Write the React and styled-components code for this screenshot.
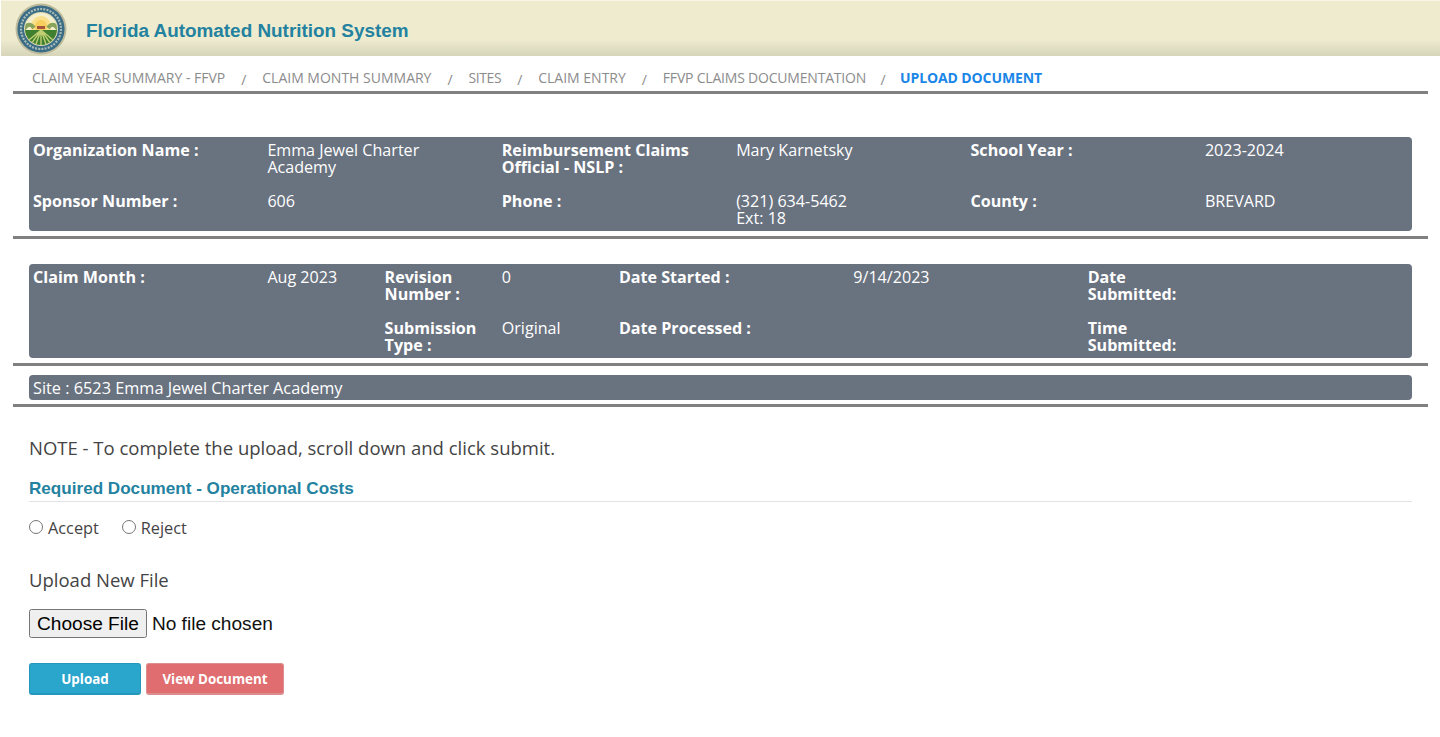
import { Fragment } from "react";
import styled, { createGlobalStyle } from "styled-components";

const GlobalStyle = createGlobalStyle`
  html, body { margin: 0; padding: 0; background: #fff; }
  body { font-family: "Open Sans", "Noto Sans", sans-serif; color: #444; }
  * { box-sizing: border-box; }
`;

const Header = styled.header`
  height: 56px;
  margin-left: 1px;
  padding: 1px 0 0 14px;
  display: flex;
  align-items: center;
  gap: 19px;
  background: linear-gradient(to bottom, #eeebcf 0%, #eeebcf 70%, #d6d4b9 100%);
  border-top: 1px solid #f6f5e6;
`;

const Title = styled.h1`
  margin: 3px 0 0;
  font-family: "Liberation Sans", Arial, sans-serif;
  font-size: 18.9px;
  font-weight: 700;
  color: #23829f;
`;

const Breadcrumbs = styled.nav`
  height: 38px;
  margin: 0 12px 0 13px;
  padding: 13px 0 0 19px;
  display: flex;
  border-bottom: 3px solid #808080;
  font-size: 14px;
  line-height: 17px;
`;

const Crumb = styled.span`
  color: ${(p) => (p.$active ? "#1a86e8" : "#8c8c8c")};
  font-weight: ${(p) => (p.$active ? 700 : 400)};
  letter-spacing: ${(p) => p.$track || 0}px;
  white-space: nowrap;
`;

const Slash = styled.span`
  width: ${(p) => p.$width}px;
  text-align: center;
  color: #8c8c8c;
  padding-top: 2px;
`;

const Panel = styled.section`
  margin: ${(p) => p.$top}px 28px 0 29px;
  padding: 5px 0 4px 4px;
  display: grid;
  grid-template-columns: repeat(11, 117.2px) 1fr;
  row-gap: 17px;
  background: #69727f;
  border-radius: 4px;
  color: #fff;
  font-size: 16.1px;
  line-height: 17px;
`;

const Cell = styled.div`
  grid-column: span ${(p) => p.$span};
  font-weight: ${(p) => (p.$label ? 700 : 400)};
  min-height: 34px;
  padding-right: 8px;
  white-space: pre-line;
`;

const SiteBar = styled.div`
  margin: 9px 28px 0 29px;
  height: 25px;
  padding-left: 4px;
  background: #69727f;
  border-radius: 4px;
  color: #fff;
  font-size: 16.3px;
  line-height: 26px;
`;

const Rule = styled.hr`
  margin: ${(p) => p.$top}px 12px 0 13px;
  border: 0;
  height: 3px;
  background: #808080;
`;

const Content = styled.main`
  padding: 0 28px 0 29px;
`;

const Note = styled.p`
  margin: 29px 0 0;
  font-size: 18.5px;
  line-height: 24px;
  font-weight: 500;
  color: #444;
`;

const SectionTitle = styled.h2`
  margin: 19px 0 0;
  padding-bottom: 2px;
  border-bottom: 1px solid #e3e3e3;
  font-family: "Liberation Sans", Arial, sans-serif;
  font-size: 17.1px;
  line-height: 20px;
  font-weight: 700;
  color: #23829f;
`;

const Radios = styled.div`
  margin-top: 15px;
  height: 22px;
  display: flex;
  align-items: center;
  gap: 23px;
`;

const RadioLabel = styled.label`
  display: flex;
  align-items: center;
  gap: 5px;
  font-size: 16.3px;
  color: #444;
`;

const Radio = styled.input`
  width: 14px;
  height: 14px;
  margin: 0;
  position: relative;
  top: -1px;
`;

const UploadLabel = styled.div`
  margin-top: 29px;
  font-size: 18.5px;
  line-height: 24px;
  color: #444;
`;

const FileInput = styled.input`
  display: block;
  margin-top: 17px;
  width: 320px;
  height: 29px;
  font-family: "Liberation Sans", Arial, sans-serif;
  font-size: 19.1px;
  color: #111;

  &::file-selector-button {
    height: 29px;
    margin-right: 5px;
  }
`;

const Actions = styled.div`
  margin-top: 25px;
  display: flex;
  gap: 5px;
`;

const Button = styled.button`
  height: 32px;
  width: ${(p) => p.$width}px;
  padding: 0;
  border: 1px solid ${(p) => p.$border};
  border-bottom-width: 2px;
  border-radius: 3px;
  background: ${(p) => p.$bg};
  color: #fff;
  font-family: "Open Sans", sans-serif;
  font-size: 13.4px;
  font-weight: 700;
`;

const SealArt = () => (
  <svg width="52" height="52" viewBox="0 0 52 52" aria-hidden="true">
    <defs>
      <clipPath id="sealInner">
        <circle cx="26" cy="26" r="16" />
      </clipPath>
    </defs>
    <circle cx="26" cy="26" r="25.5" fill="#bdbb9c" />
    <circle cx="26" cy="26" r="23.6" fill="#3a6c86" />
    <circle cx="26" cy="26" r="20" fill="none" stroke="#a9bcb8" strokeWidth="2.2" strokeDasharray="2 1.2" />
    <circle cx="26" cy="26" r="17" fill="#dcdab4" />
    <g clipPath="url(#sealInner)">
      <rect x="8" y="8" width="36" height="19" fill="#f6efcd" />
      <circle cx="26" cy="23" r="10" fill="#f9e08c" />
      <circle cx="26" cy="23" r="6" fill="#f8cf5c" />
      <path d="M9 26 q5 -8 10 -1 M33 25 q5 -7 10 1" stroke="#88a35a" strokeWidth="4" fill="none" />
      <rect x="22" y="23" width="8" height="3" fill="#a5553c" />
      <rect x="8" y="27" width="36" height="18" fill="#3f7f30" />
      <path
        d="M26 27 L8 42 M26 27 L14 44 M26 27 L20 44 M26 27 L26 44 M26 27 L32 44 M26 27 L38 44 M26 27 L44 42"
        stroke="#c0cf72"
        strokeWidth="1.4"
      />
    </g>
  </svg>
);

const crumbs = [
  ["CLAIM YEAR SUMMARY - FFVP", 0, 37],
  ["CLAIM MONTH SUMMARY", 0, 37],
  ["SITES", -0.4, 37],
  ["CLAIM ENTRY", 0, 37],
  ["FFVP CLAIMS DOCUMENTATION", -0.2, 34],
];

const orgCells = [
  ["Organization Name :", 2, true],
  ["Emma Jewel Charter\nAcademy", 2],
  ["Reimbursement Claims Official - NSLP :", 2, true],
  ["Mary Karnetsky", 2],
  ["School Year :", 2, true],
  ["2023-2024", 2],
  ["Sponsor Number :", 2, true],
  ["606", 2],
  ["Phone :", 2, true],
  ["(321) 634-5462\nExt: 18", 2],
  ["County :", 2, true],
  ["BREVARD", 2],
];

const claimCells = [
  ["Claim Month :", 2, true],
  ["Aug 2023", 1],
  ["Revision Number :", 1, true],
  ["0", 1],
  ["Date Started :", 2, true],
  ["9/14/2023", 2],
  ["Date Submitted:", 1, true],
  ["", 2],
  ["", 2],
  ["", 1],
  ["Submission Type :", 1, true],
  ["Original", 1],
  ["Date Processed :", 2, true],
  ["", 2],
  ["Time Submitted:", 1, true],
  ["", 2],
];

const renderCells = (cells) =>
  cells.map(([text, span, label], i) => (
    <Cell key={i} $span={span} $label={label}>
      {text}
    </Cell>
  ));

export default function App() {
  return (
    <>
      <GlobalStyle />
      <Header>
        <SealArt />
        <Title>Florida Automated Nutrition System</Title>
      </Header>
      <Breadcrumbs>
        {crumbs.map(([c, track, slash]) => (
          <Fragment key={c}>
            <Crumb $track={track}>{c}</Crumb>
            <Slash $width={slash}>/</Slash>
          </Fragment>
        ))}
        <Crumb $active $track={-0.12}>UPLOAD DOCUMENT</Crumb>
      </Breadcrumbs>
      <Panel $top={43}>{renderCells(orgCells)}</Panel>
      <Rule $top={5} />
      <Panel $top={25}>{renderCells(claimCells)}</Panel>
      <Rule $top={5} />
      <SiteBar>Site : 6523 Emma Jewel Charter Academy</SiteBar>
      <Rule $top={4} />
      <Content>
        <Note>NOTE - To complete the upload, scroll down and click submit.</Note>
        <SectionTitle>Required Document - Operational Costs</SectionTitle>
        <Radios>
          <RadioLabel>
            <Radio type="radio" name="decision" />
            Accept
          </RadioLabel>
          <RadioLabel>
            <Radio type="radio" name="decision" />
            Reject
          </RadioLabel>
        </Radios>
        <UploadLabel>Upload New File</UploadLabel>
        <FileInput type="file" />
        <Actions>
          <Button $width={112} $bg="#2aa5cb" $border="#2597ba">Upload</Button>
          <Button $width={138} $bg="#e06d6f" $border="#dc8e8f">View Document</Button>
        </Actions>
      </Content>
    </>
  );
}
